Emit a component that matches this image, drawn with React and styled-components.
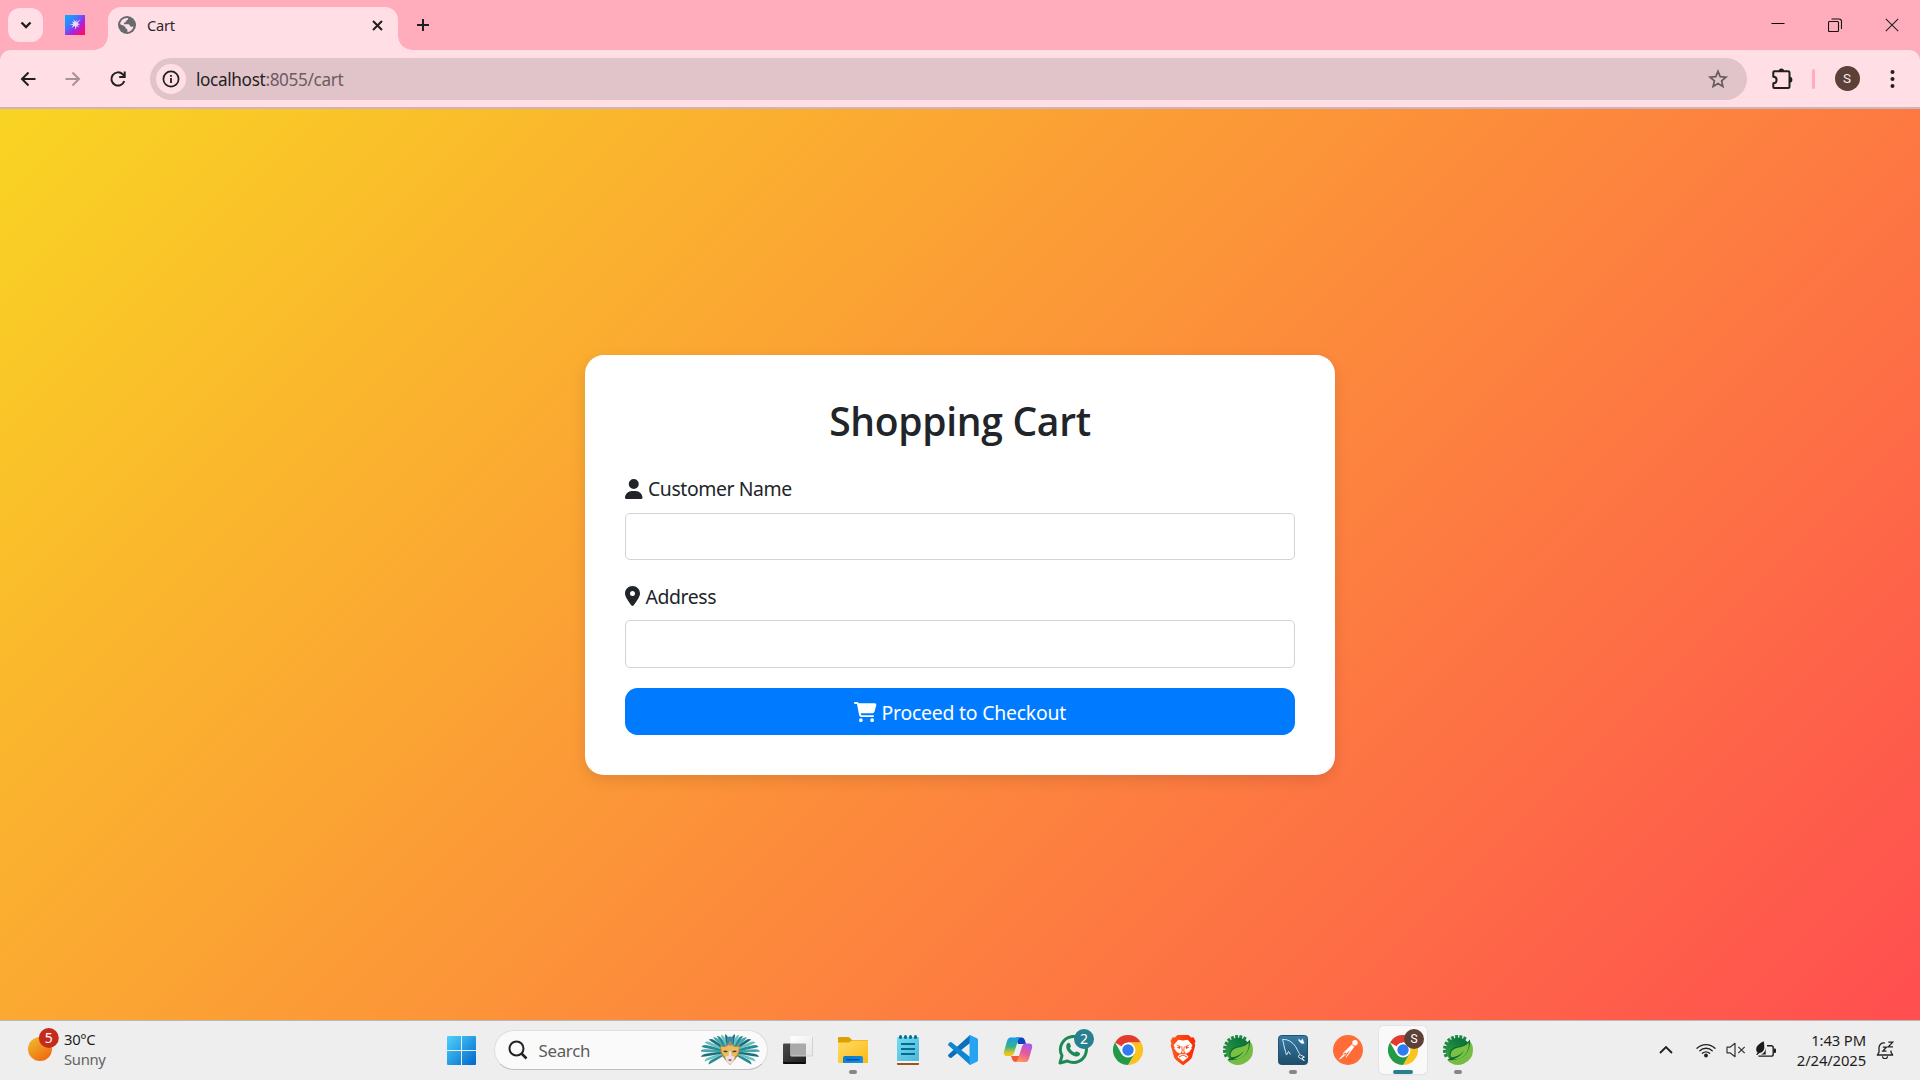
import React from "react";
import styled, { createGlobalStyle } from "styled-components";
import { FaUser, FaLocationDot, FaCartShopping } from "react-icons/fa6";

const GlobalStyle = createGlobalStyle`
  * { box-sizing: border-box; }
  html, body { margin: 0; padding: 0; overflow: hidden; }
  body { font-family: "Noto Sans", "Open Sans", sans-serif; color: #212529; }
  svg { display: block; flex: none; }
`;

const Screen = styled.div`
  width: 1920px;
  height: 1080px;
  display: grid;
  grid-template-rows: 50px 59px 911px 60px;
  background: #ffadbc;
  overflow: hidden;
`;

/* ---------- tab strip ---------- */

const TabStrip = styled.header`
  display: flex;
  align-items: center;
  padding-left: 8px;
`;

const TabSearch = styled.button`
  width: 35px;
  height: 34px;
  padding: 0;
  border: 0;
  border-radius: 12px;
  background: #ffdfe5;
  display: grid;
  place-items: center;
`;

const PinnedTab = styled.div`
  display: flex;
  margin: 0 9px 0 22px;
`;

const TabFoot = styled.span`
  width: 14px;
  height: 14px;
  align-self: flex-end;
  background: radial-gradient(
    circle at ${(p) => (p.$side === "left" ? "0 0" : "100% 0")},
    transparent 13.5px,
    #ffdfe5 14px
  );
`;

const Tab = styled.div`
  width: 290px;
  height: 43px;
  align-self: flex-end;
  display: flex;
  align-items: center;
  padding: 0 14px 7px 10px;
  border-radius: 13px 13px 0 0;
  background: #ffdfe5;
`;

const TabTitle = styled.span`
  flex: 1;
  margin-left: 11px;
  font-size: 14.6px;
  letter-spacing: -0.2px;
  color: #2b2527;
`;

const NewTab = styled.div`
  margin-left: 4px;
`;

const WindowButtons = styled.div`
  display: flex;
  align-items: center;
  gap: 43px;
  margin: 0 21.5px 0 auto;
`;

/* ---------- toolbar ---------- */

const Toolbar = styled.div`
  display: flex;
  align-items: center;
  padding: 0 18px 0 18px;
  border-bottom: 2px solid #cdb4bb;
  border-radius: 11px 11px 0 0;
  background: #ffdfe5;
`;

const NavButtons = styled.div`
  display: flex;
  gap: 25px;
  margin-right: 22px;
`;

const AddressBar = styled.div`
  width: 1597px;
  height: 42px;
  display: flex;
  align-items: center;
  padding: 0 18px 0 6px;
  border-radius: 21px;
  background: #e1c4ca;
`;

const SiteInfo = styled.span`
  width: 30px;
  height: 30px;
  border-radius: 50%;
  background: #ffdfe5;
  display: grid;
  place-items: center;
`;

const Url = styled.span`
  flex: 1;
  margin-left: 10px;
  padding-top: 1px;
  font-size: 17.2px;
  letter-spacing: -0.36px;
  color: #6c5c61;
  b { font-weight: 400; color: #241f21; }
`;

const ToolbarActions = styled.div`
  flex: 1;
  display: flex;
  align-items: center;
  margin-left: 23.5px;
`;

const Divider = styled.span`
  width: 3px;
  height: 20px;
  margin: 0 20px 0 19px;
  border-radius: 2px;
  background: #ffadbc;
`;

const Avatar = styled.span`
  width: 25px;
  height: 25px;
  border-radius: 50%;
  background: #5d4037;
  color: #f6efed;
  font: 13.5px/25px Roboto, sans-serif;
  text-align: center;
`;

const MenuSlot = styled.span`
  margin-left: 27px;
`;

/* ---------- page ---------- */

const Page = styled.main`
  display: flex;
  align-items: center;
  justify-content: center;
  padding-top: 1px;
  background: linear-gradient(135deg, #f9d423, #ff4e50);
`;

const Card = styled.form`
  width: 750px;
  padding: 40px;
  border-radius: 18.75px;
  background: #fff;
  box-shadow: 0 5px 15px rgba(0, 0, 0, 0.11);
`;

const Title = styled.h2`
  margin: 0 0 27px;
  font-family: "Open Sans", "Noto Sans", sans-serif;
  font-size: 39px;
  font-weight: 600;
  line-height: 51px;
  letter-spacing: -0.3px;
  text-align: center;
`;

const Field = styled.div`
  margin-bottom: 20px;
`;

const Label = styled.label`
  display: flex;
  align-items: center;
  gap: 5.5px;
  height: 30px;
  margin-bottom: 10px;
  padding-top: 1.5px;
  font-size: 19.4px;
  letter-spacing: -0.4px;
`;

const Input = styled.input`
  display: block;
  width: 100%;
  height: 47.5px;
  border: 1px solid #ced4da;
  border-radius: 5px;
  outline: none;
  background: #fff;
`;

const Checkout = styled.button`
  width: 100%;
  height: 47.5px;
  display: flex;
  align-items: center;
  justify-content: center;
  gap: 5px;
  padding-top: 2px;
  border: 0;
  border-radius: 12.5px;
  background: #007bff;
  color: #fff;
  font-family: inherit;
  font-size: 19.4px;
  letter-spacing: -0.22px;
`;

/* ---------- taskbar ---------- */

const Taskbar = styled.footer`
  display: grid;
  grid-template-columns: 434px auto 1fr;
  border-top: 1px solid #b9b9bb;
  background: #eeeeee;
`;

const Weather = styled.div`
  display: flex;
  align-items: center;
  gap: 4px;
  padding: 0 0 3px 27px;
`;

const Lines = styled.div`
  font-size: 14.8px;
  line-height: 20px;
  letter-spacing: -0.3px;
  color: #1d1d1d;
`;

const Muted = styled.div`
  color: #636363;
`;

const Apps = styled.div`
  display: flex;
`;

const AppCell = styled.div`
  width: 55px;
  height: 58px;
  position: relative;
  display: grid;
  place-items: center;
`;

const AppTile = styled.div`
  width: 48px;
  height: 48px;
  display: grid;
  place-items: center;
  border-radius: 5px;
  background: ${(p) => (p.$active ? "#f9f9f9" : "transparent")};
  box-shadow: ${(p) => (p.$active ? "0 0 0 1px #e4e4e4, 0 1px 1px #d5d5d5" : "none")};
`;

const Indicator = styled.span`
  position: absolute;
  bottom: 5px;
  width: ${(p) => (p.$active ? 20 : 8)}px;
  height: 4px;
  border-radius: 2px;
  background: ${(p) => (p.$active ? "#26808f" : "#868686")};
`;

const Badge = styled.span`
  position: absolute;
  top: 8px;
  left: 28.5px;
  width: 20px;
  height: 20px;
  border-radius: 50%;
  background: ${(p) => p.$color};
  color: #fff;
  font-size: 14px;
  line-height: 20px;
  text-align: center;
`;

const AvatarBadge = styled(Badge)`
  font-family: Roboto, sans-serif;
  font-size: 12px;
`;

const SearchBox = styled.div`
  width: 274px;
  height: 40px;
  display: flex;
  align-items: center;
  margin: 9px 3px 0 4.500px;
  padding: 0 6px 0 13px;
  border: 1px solid #dedede;
  border-bottom-color: #bfbfbf;
  border-radius: 20px;
  background: #fafafa;
`;

const SearchText = styled.span`
  flex: 1;
  margin-left: 11px;
  font-size: 16.9px;
  letter-spacing: -0.3px;
  color: #5d5d5d;
`;

const Tray = styled.div`
  display: flex;
  align-items: center;
  justify-content: flex-end;
  padding: 0 26px 2px 0;
`;

const TrayGroup = styled.div`
  display: flex;
  align-items: center;
  gap: 10px;
  margin: 0 20px 0 23px;
`;

const ClockText = styled(Lines)`
  width: 70px;
  margin-right: 10px;
  display: flex;
  flex-direction: column;
  align-items: flex-end;
  letter-spacing: -0.12px;
  white-space: nowrap;
`;

/* ---------- icons ---------- */

const Icon = ({ w = 30, h = w, box = `0 0 ${w} ${h}`, children, ...rest }) => (
  <svg width={w} height={h} viewBox={box} fill="none" {...rest}>
    {children}
  </svg>
);

const stroke = (color, width) => ({ stroke: color, strokeWidth: width });

const Favicon = () => (
  <Icon w={20}>
    <defs>
      <linearGradient id="fav" x1="0" y1="0" x2="1" y2="1">
        <stop offset="0" stopColor="#00b4ff" />
        <stop offset=".35" stopColor="#3b7bff" />
        <stop offset=".6" stopColor="#a325e8" />
        <stop offset=".9" stopColor="#ff0a6c" />
      </linearGradient>
    </defs>
    <path d="M0 0h20v20H0z" fill="url(#fav)" />
    <path d="M9.200 7.200L8.300 4l2 2.700 1.200-2.200-.1 2.900 4.400-3.600-3.200 4.500 2.700.9-2.800.7 1.800 2.700-2.700-1.700-.9 4-.9-4.200L6.600 13l1.500-2.900-3.400-.6 3.600-.8-1.300-2.200z" fill="#e4e0ee" />
  </Icon>
);

const Globe = () => (
  <Icon w={18}>
    <circle cx="9" cy="9" r="9" fill="#676b70" />
    <path d="M9.600 1.900C11 2 9.500 4 8.400 4.700c-.8.5-.5 1.600-1.500 1.900-.9.300-1.500 1.100-.7 1.700h4.500c1 .3.8 1.900 2 2.100 1.300.2 2.300.500 2.900-.100C14.900 13.500 12.600 15.700 9.700 16c-.6-.8-.2-1.600-.4-2.500-.3-.9-1.800-.9-1.900-2.100C7.300 10 4.800 9 2.100 8.200 2.400 4.600 5.600 1.600 9.600 1.900z" fill="#ffdfe5" />
    <path d="M10.800 1.800c3.200.800 5.400 3.700 5.400 7.100-1.400.9-2 .2-3.100-.3-1-.5-.6-1.600-1.800-1.700-1.300-.1-1.800-.8-1.300-1.900.4-.9 1.700-.7 1.600-1.800z" fill="#676b70" />
  </Icon>
);

const Puzzle = () => (
  <Icon w={22}>
    <path d="M2.300 4.200c0-.6.400-1 1-1H17c.9 0 1.500.6 1.500 1.500v13.800c0 .9-.6 1.500-1.500 1.500H3.300c-.6 0-1-.4-1-1v-3.800c2 0 3.300-1.400 3.300-3.200S4.300 8.800 2.300 8.800z" {...stroke("#1f1f1f", 2)} strokeLinejoin="round" />
    <path d="M7.700 3.200a2.700 2.700 0 015.400 0zM18.500 8.800a2.900 2.900 0 010 5.800z" fill="#1f1f1f" />
  </Icon>
);

const FEATHERS = [30, 20, 9, -2, -12, -22, -33, -44, -55, -67, -80];
const TEALS = ["#2a8995", "#64c3bd", "#1e6c7d", "#45a8ab"];

const Mask = () => (
  <Icon w={60} h={32}>
    {FEATHERS.map((deg, i) => {
      const a = (deg * Math.PI) / 180;
      const len = 1 / Math.hypot(Math.cos(a) / 28, Math.sin(a) / 16.5);
      const d = `M3 -1.200L${len - 4} -1.500Q${len} -1.500 ${len + 1} 1Q${len - 3} 1.700 3 .9Z`;
      return (
        <g key={deg} fill={TEALS[i % 4]}>
          <path transform={`translate(30 17.500) rotate(${deg})`} d={d} />
          <path transform={`translate(28 17.500) scale(-1 1) rotate(${deg})`} d={d} />
        </g>
      );
    })}
    <path d="M26 3.500q3-2 6 0V11h-6z" fill="#3c8ba5" />
    <path d="M19 11.500q4 2 7-.5l3-3 3 3q3 2.500 7 .5 0 9-4.500 13.500L29 31l-5.500-6Q19 20.500 19 11.500z" fill="#b98434" />
    <path d="M20 12.500q4 1.500 7-1l2-2 2 2q3 2.500 7 1-.2 6-3 9.500l-4 1.500h-4L23 22q-2.800-3.500-3-9.500z" fill="#e9bb62" />
    <path d="M28.300 17h1.400l.8 5 3.500.5c-.5 3.500-2.500 6-5 8-2.500-2-4.500-4.500-5-8l3.500-.5z" fill="#e6e2e8" />
    <path d="M22 17q2.500-1.500 5 .7-3 1.600-5-.7zM31 17.700q2.500-2.200 5-.7-2 2.300-5 .7z" fill="#4c3e36" />
    <path d="M27 25.800q2-1 4 0-2 2.600-4 0z" fill="#d62d43" />
    <path d="M27.300 10l1.700-3.500 1.700 3.500-1.700 2.500z" fill="#a98a78" />
  </Icon>
);

const WindowsLogo = () => (
  <Icon w={29}>
    <defs>
      <linearGradient id="win" x1="0" y1="0" x2="29" y2="29" gradientUnits="userSpaceOnUse">
        <stop offset="0" stopColor="#4fd2fc" />
        <stop offset="1" stopColor="#0067cb" />
      </linearGradient>
    </defs>
    <path fill="url(#win)" d="M1 0h13v14H0V1q0-1 1-1zM15 0h13q1 0 1 1v13H15zM0 15h14v14H1q-1 0-1-1zM15 15h14v13q0 1-1 1H15z" />
  </Icon>
);

const TaskView = () => (
  <Icon>
    <defs>
      <linearGradient id="tv" x1="0" y1="0" x2="1" y2="1">
        <stop offset="0" stopColor="#4b4b4b" />
        <stop offset="1" stopColor="#1e1e1e" />
      </linearGradient>
      <linearGradient id="tvf" x1="0" y1="0" x2="1" y2="1">
        <stop offset="0" stopColor="#ffffff" />
        <stop offset="1" stopColor="#e6e6e6" />
      </linearGradient>
    </defs>
    <rect x="0" y="8.500" width="23" height="20" rx="1" fill="url(#tv)" />
    <path d="M0 27h23v1q0 1-1 1H1q-1 0-1-1z" fill="#0c0c0c" />
    <rect x="7.500" y="1" width="22" height="20" rx="1" fill="url(#tvf)" />
    <path d="M7.500 8.500H23V21H7.500z" fill="#aaa" />
    <path d="M8 21h21.500V2" {...stroke("#d2d2d2", 1)} />
  </Icon>
);

const Explorer = () => (
  <Icon>
    <defs>
      <linearGradient id="fold" x1="0" y1="0" x2="1" y2="1">
        <stop offset="0" stopColor="#ffdc68" />
        <stop offset="1" stopColor="#fdb913" />
      </linearGradient>
      <linearGradient id="foldb" x1="0" y1="0" x2="1" y2="1">
        <stop offset="0" stopColor="#0e74cd" />
        <stop offset="1" stopColor="#1495ea" />
      </linearGradient>
    </defs>
    <path d="M0 3q0-1 1-1h9q1 0 2 1l2 2h15q1 0 1 1v4H0z" fill="#dea000" />
    <path d="M0 7.500h11l3-2h15q1 0 1 1V28H1q-1 0-1-1z" fill="url(#fold)" />
    <path d="M5 28v-5q0-2 2-2h16q2 0 2 2v5z" fill="url(#foldb)" />
    <path d="M9 24.700h12" {...stroke("#08509c", 1.5)} strokeLinecap="round" />
  </Icon>
);

const Notepad = () => (
  <Icon>
    <defs>
      <linearGradient id="note" x1="0" y1="0" x2="1" y2="1">
        <stop offset="0" stopColor="#74dbf0" />
        <stop offset="1" stopColor="#4bb9dc" />
      </linearGradient>
    </defs>
    <rect x="4" y="24" width="22" height="6" rx="1" fill="#a2521b" />
    <path d="M4 24h22v4H4z" fill="#f5f5f5" />
    <path d="M4 3q0-1 1-1h20q1 0 1 1v23H4z" fill="url(#note)" />
    <path d="M8 9h14M8 14h14M8 19h14" {...stroke("#076b8c", 2)} />
    {[7.5, 12.5, 17.5, 22.5].map((x) => (
      <rect key={x} x={x - 1.5} y="0" width="3" height="4" rx="1.500" fill="#0a6d8f" />
    ))}
  </Icon>
);

const VsCode = () => (
  <Icon>
    <path d="M22 8L3.500 22.700q-.8.600-1.600 0L.5 21.400q-.9-.9 0-1.800L22 0z" fill="#0b6fbb" />
    <path d="M22 22L3.500 7.300q-.8-.6-1.600 0L.5 8.600q-.9.900 0 1.800L22 30z" fill="#0f86d3" />
    <path d="M22 0l7 3.300q1 .5 1 1.600v20.200q0 1.100-1 1.600L22 30q-.5-.2-.5-1V1q0-.8.500-1z" fill="#27a3f3" />
  </Icon>
);

const Copilot = () => (
  <Icon>
    <defs>
      <linearGradient id="cpa" x1="0" y1="0" x2="0" y2="1">
        <stop offset="0" stopColor="#1c9be8" />
        <stop offset=".5" stopColor="#35b28c" />
        <stop offset=".85" stopColor="#e6c51f" />
      </linearGradient>
      <linearGradient id="cpb" x1=".7" y1="0" x2=".3" y2="1">
        <stop offset="0" stopColor="#a45bf0" />
        <stop offset=".5" stopColor="#e8589d" />
        <stop offset="1" stopColor="#ff9a5c" />
      </linearGradient>
    </defs>
    <path d="M13 2.500h6q2 0 3 3l1 3.500h-8z" fill="#1040c0" />
    <path d="M18 27h-6q-2 0-3-3l-1-3h8z" fill="#f05a3c" />
    <path d="M7.500 2.500H18q-2 0-3 3L11 18q-1 3-4 3H4q-4 0-3-4.500L4 6q1-3.500 3.500-3.500z" fill="url(#cpa)" />
    <path d="M22.500 27H12q2 0 3-3l4-12.500q1-3 4-3h3q4 0 3 4.500l-3 10.500q-1 3.500-3.500 3.500z" fill="url(#cpb)" />
  </Icon>
);

const WhatsApp = () => (
  <Icon>
    <path d="M2 28l2-7.300A13 13 0 1 1 9.400 26z" {...stroke("#1c8a57", 3)} strokeLinejoin="round" />
    <path d="M9.300 8.500c1-1 2.200-.9 2.600.1l1 2.400c.2.700-1.100 1.600-.9 2.200.9 2 2.500 3.500 4.600 4.400.7.200 1.600-1.500 2.300-1.200l2.600 1.300c.9.500.6 1.800-.2 2.700-1.600 1.600-4.100 1.300-6.900-.2-3-1.700-5.300-4.400-6-7-.4-1.800-.2-3.500.9-4.700z" fill="#1c8a57" />
  </Icon>
);

const Chrome = () => (
  <Icon>
    <path d="M15 15L2 7.500A15 15 0 0 1 28 7.500H15z" fill="#e33b2e" />
    <path d="M15 7.500h13A15 15 0 0 1 15 30l6.500-11.300z" fill="#fcc31e" />
    <path d="M2 7.500A15 15 0 0 0 15 30l6.500-11.200L15 15l-6.500 3.700z" fill="#249a48" />
    <circle cx="15" cy="15" r="7.500" fill="#fff" />
    <circle cx="15" cy="15" r="5.700" fill="#2f7bf0" />
  </Icon>
);

const Brave = () => (
  <Icon>
    <defs>
      <linearGradient id="brv">
        <stop offset="0" stopColor="#ff5a1f" />
        <stop offset="1" stopColor="#fb2804" />
      </linearGradient>
    </defs>
    <path d="M9.500 0h11l2.600 2.500 2.400-.3 2 4-.9 2.300.6 2-3.400 12.300Q23 24.500 15.500 30h-1Q7 24.500 6.200 22.800L2.800 10.500l.6-2-.9-2.300 2-4 2.400.3z" fill="url(#brv)" />
    <path d="M10.300 4.800l4.700.7 4.700-.7 4.800 5.400-1.200 2.200.5 1.200-2.800 3.600-2.600 1 .6 1.800 1.500 2L15 26.500 9.500 22l1.500-2 .6-1.800-2.600-1-2.800-3.600.5-1.200-1.200-2.200z" fill="#fff" />
    <path d="M7.800 9.600l4.500 1.300.3 1-.9 2-3.200-1.600 2.800-.3zM22.200 9.600l-4.500 1.300-.3 1 .9 2 3.200-1.600-2.800-.3z" fill="#fb4a13" />
    <path d="M13.700 11.500l.6 4.500-1.300 1.400 2 1.100 2-1.100-1.300-1.400.6-4.500" {...stroke("#fb4a13", 0.9)} />
    <path d="M10.300 19.500l4.700-1.300 4.700 1.300M11 22l4-2 4 2" {...stroke("#fb4a13", 1)} />
  </Icon>
);

const TEETH = [150, 168, 186, 204, 222, 240, 258, 276, 294];

const Spring = () => (
  <Icon>
    <defs>
      <linearGradient id="gear" x1="0" y1="1" x2="1" y2="0">
        <stop offset="0" stopColor="#45a33b" />
        <stop offset=".6" stopColor="#12803f" />
        <stop offset="1" stopColor="#0c6a35" />
      </linearGradient>
    </defs>
    {TEETH.map((a) => (
      <rect key={a} x="11.500" y="-1.500" width="3.500" height="3" fill="#1c8740" transform={`translate(15 15) rotate(${a + 6})`} />
    ))}
    <circle cx="15" cy="15" r="12.300" fill="url(#gear)" />
    <path d="M26 5Q30 9 30 15A15 15 0 0 1 4.500 25.500l3-3q3 1 7 .5Q27 20 26 5z" fill="#76bc43" />
    <path d="M27 4.500Q22 11 14 11.500 7 13 6.500 19.500q0 2 1 3.500-2 1-3.200 2Q17 26 23 19q4.500-6 4-14.500z" fill="#0d6b35" />
    <path d="M25.800 7.500Q22 12 14.500 12.700 8 14 7.500 19.700q0 1.500 1 2.600 7-.3 12.500-6.300-4 6.500-11 8.200 9 .5 13.200-6Q26 14 25.800 7.500z" fill="#79c143" />
  </Icon>
);

const MySql = () => (
  <Icon>
    <defs>
      <linearGradient id="sql" x1="0" y1="0" x2="0" y2="1">
        <stop offset="0" stopColor="#377ba6" />
        <stop offset="1" stopColor="#1e4d6a" />
      </linearGradient>
    </defs>
    <rect x=".5" y=".5" width="29" height="29" rx="3" fill="url(#sql)" stroke="#24506c" />
    <path d="M4.500 4.500C9 4 14 6.500 17.500 11.500c2.500 4 3 6.500 5 8.500l4 2-2.500 1 2.500 3M4.500 4.500c1 2.500 1 4.500 2 8.500 1 3 1 4.500 2 7l2-3.500 2 3M22 20c-1.500 0-2 1-1.300 2.300l5.300 3.200" {...stroke("#dce9f1", 1)} strokeLinejoin="round" />
    <path d="M20.500 3.500l2.500 2.300 1.500-2.300 2 5-3 .3-3-3z" fill="#f3f7fa" />
  </Icon>
);

const Postman = () => (
  <Icon>
    <circle cx="15" cy="15" r="15" fill="#ff6c37" />
    <circle cx="22" cy="7.800" r="2.700" fill="#fff" />
    <path d="M19.300 9l2.500 2.500L12 19.500l-2.200.2.700-2.200zM12 17.500l-6 6.500 1 .5 7-6zM20.800 12.500l-7.500 10-.8-.3 5.500-8z" fill="#fff" />
    <path d="M19 9.700q2 .2 2.200 2.400" {...stroke("#ff6c37", 0.8)} />
  </Icon>
);

const Chevron = ({ up }) => (
  <Icon w={14} h={10}>
    <path d={up ? "M1 8l6-6 6 6" : "M2.500 2.500L7 7l4.500-4.500"} {...stroke("#1f1f1f", up ? 1.8 : 2.400)} />
  </Icon>
);

const Wifi = () => (
  <Icon w={20} h={16}>
    <g {...stroke("#222", 1.300)} strokeLinecap="round">
      <path d="M1 6.300a12.700 12.700 0 0 1 18 0M3.800 8.800a8.800 8.800 0 0 1 12.400 0M6.400 11.300a5.100 5.100 0 0 1 7.200 0" />
    </g>
    <circle cx="10" cy="13.500" r="1.900" fill="#222" />
  </Icon>
);

const MutedSpeaker = () => (
  <Icon w={20} h={16}>
    <path d="M1 5.200h3L9 1.300v13.400l-5-3.900H1z" {...stroke("#333", 1.200)} strokeLinejoin="round" />
    <path d="M12.300 4.800l6.400 6.400m0-6.400l-6.400 6.400" {...stroke("#333", 1.200)} />
  </Icon>
);

const Battery = () => (
  <Icon w={20} h={18}>
    <path d="M11 4.700h4.200c1.300 0 2 .7 2 1.800v6.700c0 1.200-.7 1.900-2 1.900H2.500" {...stroke("#1c1c1c", 1.400)} />
    <path d="M18 7.500h1q1 0 1 1V11q0 1-1 1h-1z" fill="#1c1c1c" />
    <path d="M7.600.2C4 2.300.1 4.500.2 8.500c0 1.400.6 2.500 1.400 3.200L0 13.700h1.800l1.200-1.400C7.300 11.500 8.500 8.500 8.300 5.600 8.200 3.800 8.300 2 7.600.2z" fill="#1c1c1c" />
    <path d="M9.700 6.500v6.900H4.800q4.700-1.500 4.900-6.900z" fill="#1c1c1c" />
  </Icon>
);

const Bell = () => (
  <Icon w={18}>
    <path d="M8.800 2C5 1.600 3 4 3 7v4.300L1.300 14h15.400L15 11.300V9.500" {...stroke("#222", 1.300)} strokeLinejoin="round" />
    <path d="M6.500 15.200a2.500 2.500 0 0 0 5 0" {...stroke("#222", 1.200)} />
    <path d="M6.800 6.200h3.500L6.800 10.200h3.700M12.300 1.200h4.400l-4.400 4.600H17" {...stroke("#222", 1.300)} />
  </Icon>
);

const APPS = [
  { icon: TaskView },
  { icon: Explorer, running: true },
  { icon: Notepad },
  { icon: VsCode },
  { icon: Copilot },
  { icon: WhatsApp, badge: "2", color: "#26808f" },
  { icon: Chrome },
  { icon: Brave },
  { icon: Spring },
  { icon: MySql, running: true },
  { icon: Postman },
  { icon: Chrome, running: true, active: true, badge: "S", color: "#5d4037" },
  { icon: Spring, running: true },
];

function TaskbarApp({ app }) {
  const Glyph = app.icon;
  const Mark = app.active ? AvatarBadge : Badge;
  return (
    <AppCell>
      <AppTile $active={app.active}>
        <Glyph />
      </AppTile>
      {app.badge && <Mark $color={app.color}>{app.badge}</Mark>}
      {app.running && <Indicator $active={app.active} />}
    </AppCell>
  );
}

export default function App() {
  return (
    <Screen>
      <GlobalStyle />
      <TabStrip>
        <TabSearch aria-label="Search tabs">
          <Chevron />
        </TabSearch>
        <PinnedTab>
          <Favicon />
        </PinnedTab>
        <TabFoot $side="left" />
        <Tab>
          <Globe />
          <TabTitle>Cart</TabTitle>
          <Icon w={13}>
            <path d="M2 2l9 9m0-9l-9 9" {...stroke("#1f1f1f", 2)} />
          </Icon>
        </Tab>
        <TabFoot $side="right" />
        <NewTab>
          <Icon w={14}>
            <path d="M7 1v12M1 7h12" {...stroke("#1f1f1f", 2)} />
          </Icon>
        </NewTab>
        <WindowButtons>
          <Icon w={14}>
            <path d="M.5 5.500h13" {...stroke("#000", 1)} />
          </Icon>
          <Icon w={14}>
            <path d="M.5 4.500q0-1 1-1h8q1 0 1 1v8q0 1-1 1h-8q-1 0-1-1zM3.500 1h7.500q2.500 0 2.500 2.500v7.500" {...stroke("#111", 1.100)} />
          </Icon>
          <Icon w={14}>
            <path d="M.8.8l12.400 12.400m0-12.400L.8 13.200" {...stroke("#222", 1.100)} />
          </Icon>
        </WindowButtons>
      </TabStrip>

      <Toolbar>
        <NavButtons>
          <Icon w={20}>
            <path d="M17.500 10H4M10.500 3.500L4 10l6.500 6.500" {...stroke("#1f1f1f", 2)} />
          </Icon>
          <Icon w={20}>
            <path d="M2.500 10H16M9.500 3.500L16 10l-6.500 6.500" {...stroke("#a59297", 2)} />
          </Icon>
          <Icon w={20}>
            <path d="M16.300 12a6.600 6.600 0 1 1-1.600-6.700L16.500 7" {...stroke("#1f1f1f", 2)} />
            <path d="M16.700 2.500V8h-5.500" {...stroke("#1f1f1f", 2)} />
          </Icon>
        </NavButtons>
        <AddressBar>
          <SiteInfo>
            <Icon w={18}>
              <circle cx="9" cy="9" r="7.600" {...stroke("#1f1f1f", 1.700)} />
              <path d="M9 8v5M9 5v1.800" {...stroke("#1f1f1f", 1.800)} />
            </Icon>
          </SiteInfo>
          <Url>
            <b>localhost</b>:8055/cart
          </Url>
          <Icon w={22}>
            <path d="M11 3.300l2.200 5.300 5.800.5-4.400 3.800 1.300 5.600-4.900-3-4.900 3 1.300-5.600L3 9.100l5.800-.5z" {...stroke("#655b5f", 1.700)} />
          </Icon>
        </AddressBar>
        <ToolbarActions>
          <Puzzle />
          <Divider />
          <Avatar>S</Avatar>
          <MenuSlot>
            <Icon w={11} h={20}>
              <circle cx="5.500" cy="3" r="2" fill="#1f1f1f" />
              <circle cx="5.500" cy="10" r="2" fill="#1f1f1f" />
              <circle cx="5.500" cy="17" r="2" fill="#1f1f1f" />
            </Icon>
          </MenuSlot>
        </ToolbarActions>
      </Toolbar>

      <Page>
        <Card>
          <Title>Shopping Cart</Title>
          <Field>
            <Label htmlFor="name">
              <FaUser size={20} style={{ width: 17.5 }} />
              Customer Name
            </Label>
            <Input id="name" />
          </Field>
          <Field>
            <Label htmlFor="address">
              <FaLocationDot size={20} style={{ width: 15 }} />
              Address
            </Label>
            <Input id="address" />
          </Field>
          <Checkout type="button">
            <FaCartShopping size={20} style={{ width: 22.5 }} />
            Proceed to Checkout
          </Checkout>
        </Card>
      </Page>

      <Taskbar>
        <Weather>
          <Icon w={33} h={44}>
            <defs>
              <linearGradient id="sun" x1="0" y1="0" x2=".7" y2="1">
                <stop offset="0" stopColor="#eec02f" />
                <stop offset="1" stopColor="#f06a10" />
              </linearGradient>
            </defs>
            <circle cx="13" cy="22" r="12" fill="url(#sun)" />
            <circle cx="21.800" cy="11" r="10" fill="#c42b1c" />
            <text x="21.800" y="16" textAnchor="middle" fontSize="14" fill="#fff">5</text>
          </Icon>
          <Lines>
            30°C
            <Muted>Sunny</Muted>
          </Lines>
        </Weather>
        <Apps>
          <AppCell>
            <WindowsLogo />
          </AppCell>
          <SearchBox>
            <Icon w={20}>
              <circle cx="8.500" cy="8.500" r="7" {...stroke("#222", 2)} />
              <path d="M13.500 13.500l5 5" {...stroke("#222", 2.500)} />
            </Icon>
            <SearchText>Search</SearchText>
            <Mask />
          </SearchBox>
          {APPS.map((app, i) => (
            <TaskbarApp key={i} app={app} />
          ))}
        </Apps>
        <Tray>
          <Chevron up />
          <TrayGroup>
            <Wifi />
            <MutedSpeaker />
            <Battery />
          </TrayGroup>
          <ClockText>
            <span>1:43 PM</span>
            <span>2/24/2025</span>
          </ClockText>
          <Bell />
        </Tray>
      </Taskbar>
    </Screen>
  );
}
